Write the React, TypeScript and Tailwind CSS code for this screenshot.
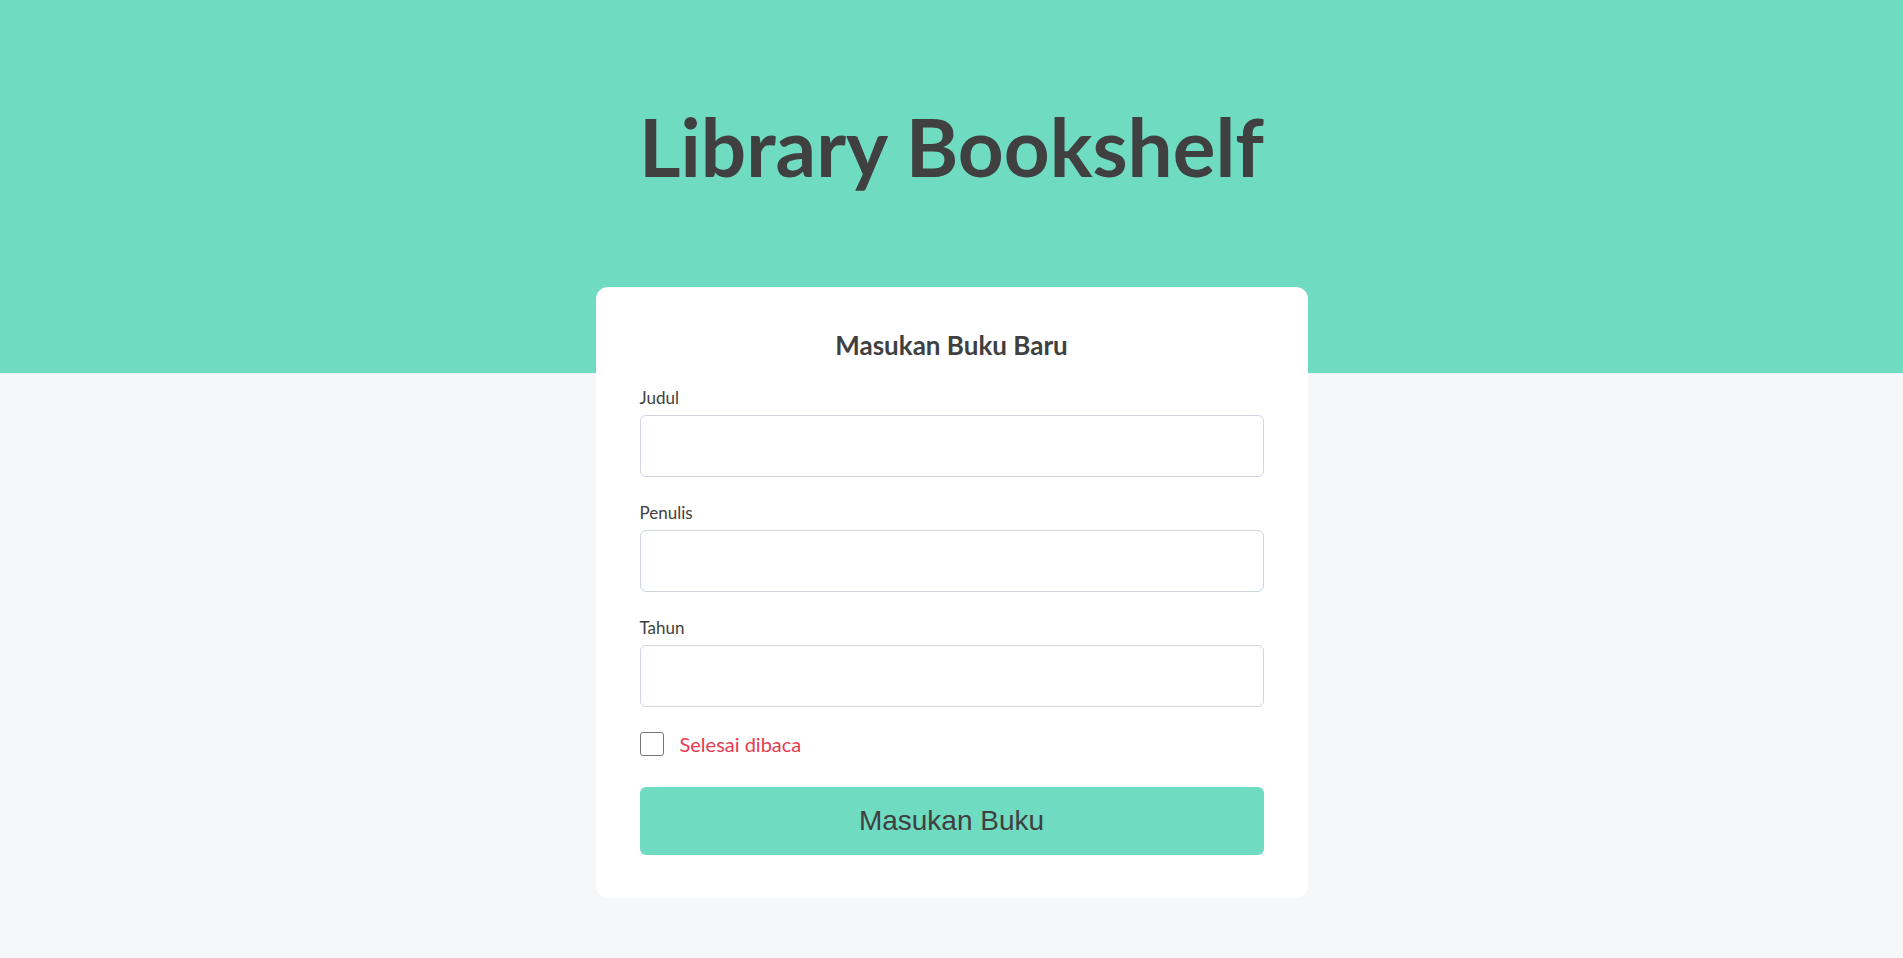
import { useState } from 'react'

export default function App() {
    const [done, setDone] = useState(false)

    return (
        <div className="min-h-screen bg-[#f6f7f9] text-[#404040] font-['Lato','Noto_Sans',sans-serif]">
            {/* header */}
            <header className="h-[373px] bg-[#6fdbc1] pt-[98px]">
                <h1 className="text-center text-[80px] leading-[96px] font-bold">Library Bookshelf</h1>
            </header>

            <main className="-mt-[86px] pb-[60px]">
                <section className="mx-auto w-[712px] rounded-xl bg-white px-[44px] pt-[43px] pb-[43px]">
                    <h2 className="text-center text-[26px] leading-[31px] font-bold">Masukan Buku Baru</h2>

                    <form className="mt-[28px]" onSubmit={(e) => e.preventDefault()}>
                        <div className="flex flex-col gap-[27px]">
                            <div>
                                <label htmlFor="judul" className="block text-[17px] leading-[18px] mb-2">Judul</label>
                                <input id="judul" type="text" className="block w-full h-[62px] px-3 rounded-md border border-[#cfd6e0] bg-white focus:outline-none" />
                            </div>
                            <div>
                                <label htmlFor="penulis" className="block text-[17px] leading-[18px] mb-2">Penulis</label>
                                <input id="penulis" type="text" className="block w-full h-[62px] px-3 rounded-md border border-[#cfd6e0] bg-white focus:outline-none" />
                            </div>
                            <div>
                                <label htmlFor="tahun" className="block text-[17px] leading-[18px] mb-2">Tahun</label>
                                <input id="tahun" type="number" className="block w-full h-[62px] px-3 rounded-md border border-[#cfd6e0] bg-white focus:outline-none" />
                            </div>
                        </div>

                        <div className="mt-[25px] flex items-center gap-4">
                            <input
                                id="selesai"
                                type="checkbox"
                                checked={done}
                                onChange={() => setDone(!done)}
                                className="appearance-none w-6 h-6 rounded-[3px] border-[1.5px] border-[#767676] bg-white checked:bg-[#6fdbc1]"
                            />
                            <label htmlFor="selesai" className="text-[20px] leading-[24px] text-[#e63a4f]">Selesai dibaca</label>
                        </div>

                        <button type="submit" className="mt-[31px] block w-full h-[68px] rounded-md bg-[#6fdbc1] text-[28px] text-[#404040] font-['Liberation_Sans',Arial,sans-serif]">
                            Masukan Buku
                        </button>
                    </form>
                </section>
            </main>
        </div>
    )
}
